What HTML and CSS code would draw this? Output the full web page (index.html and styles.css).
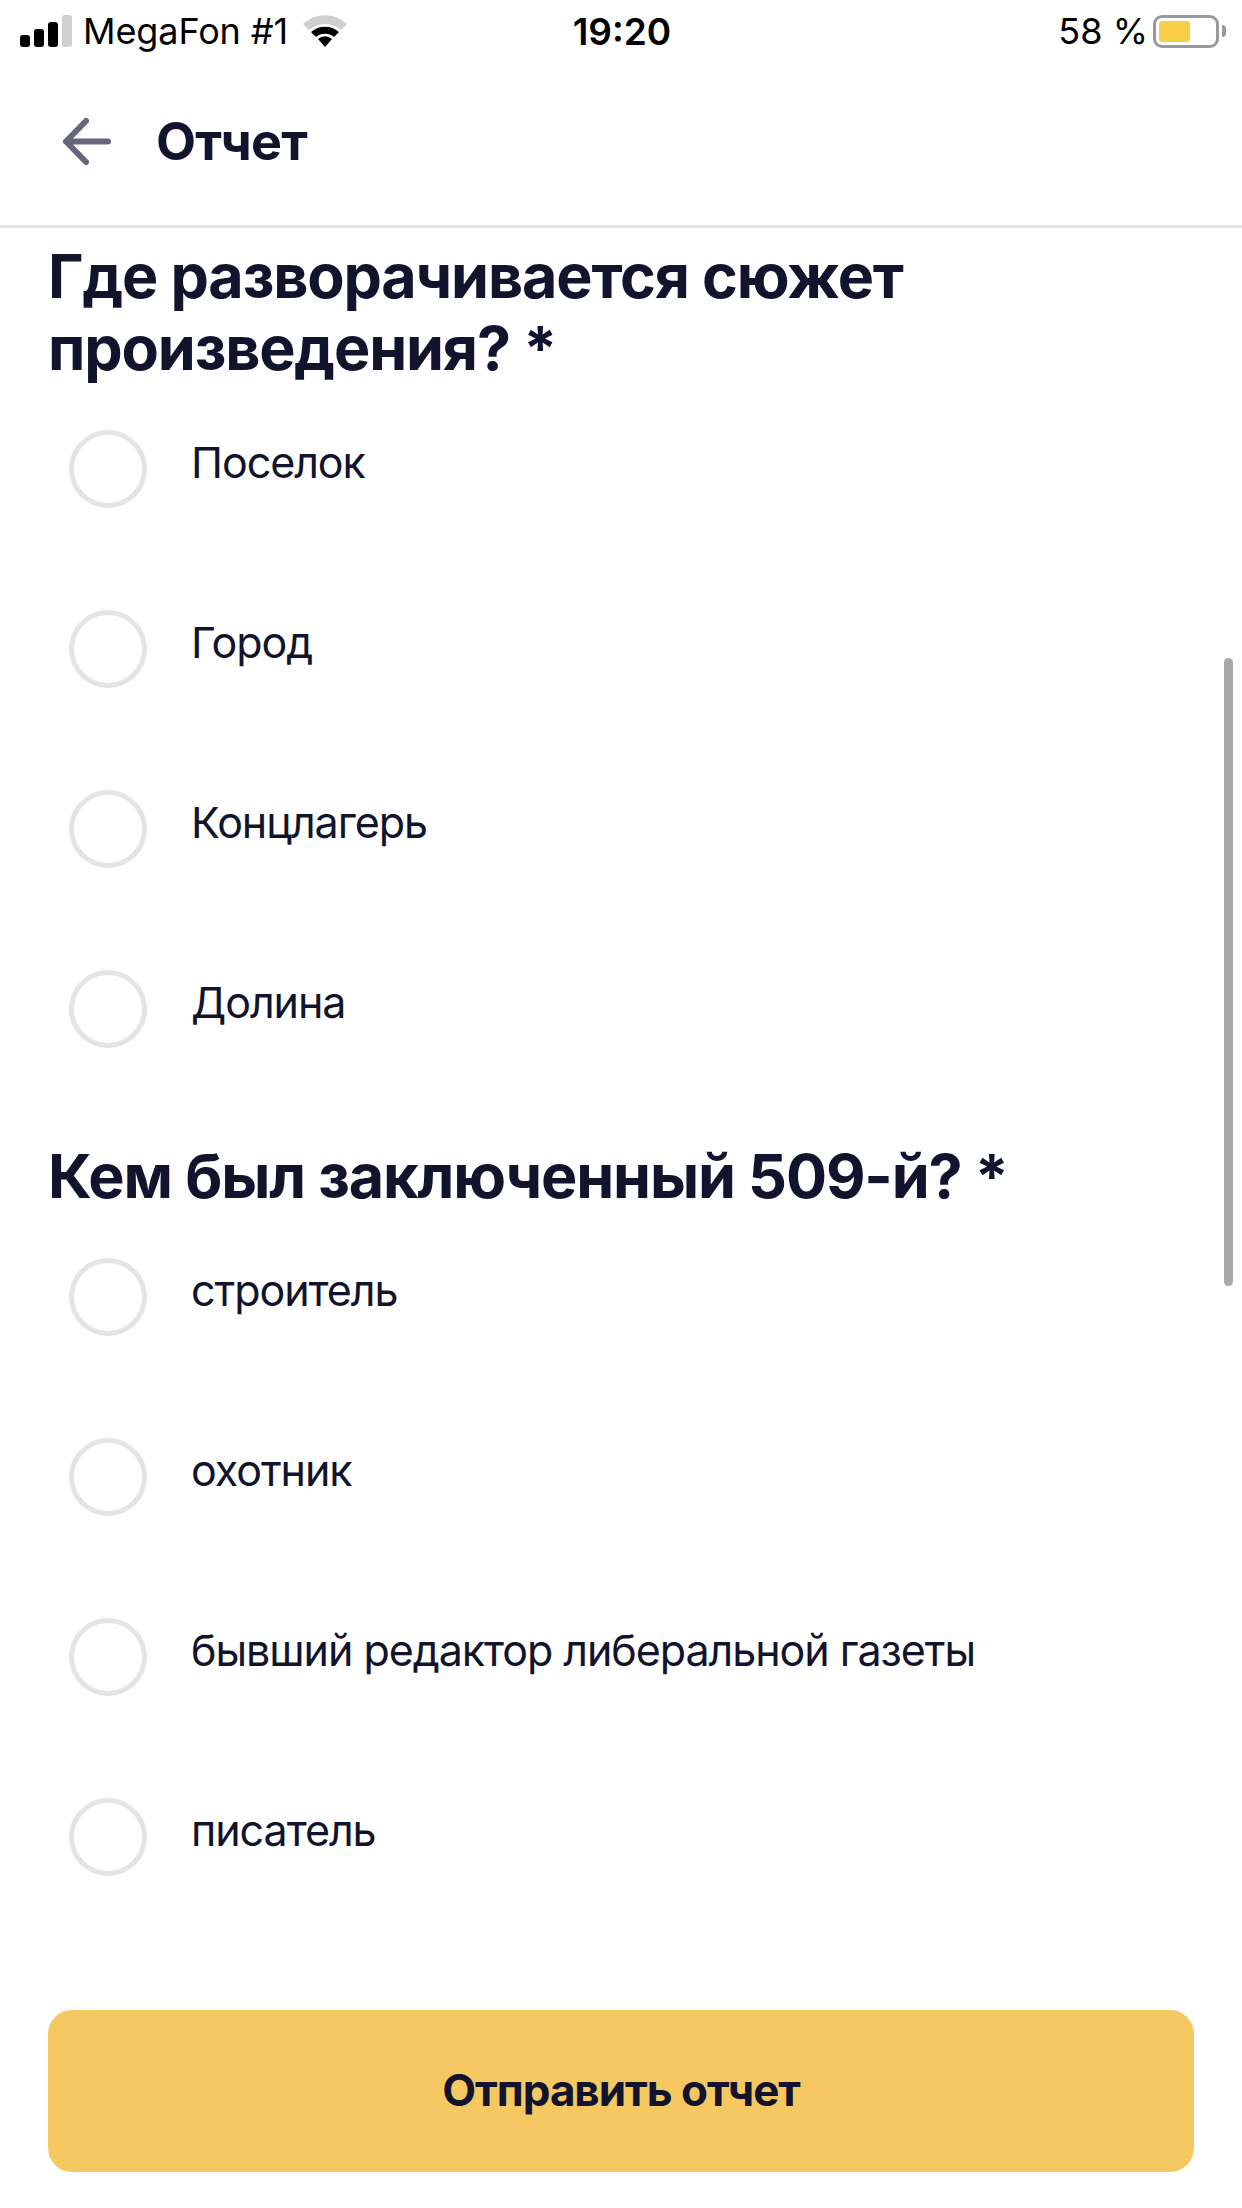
FILE: index.html
```html
<!DOCTYPE html>
<html lang="ru">
<head>
    <meta charset="UTF-8">
    <meta name="viewport" content="width=device-width, initial-scale=1.0">
    <title>Отчет</title>
    <link rel="stylesheet" href="styles.css">
</head>
<body>

<!-- статус-бар -->
<div class="statusbar">
    <div class="status-left">
        <div class="signal">
            <span class="bar bar-1"></span>
            <span class="bar bar-2"></span>
            <span class="bar bar-3"></span>
            <span class="bar bar-4"></span>
        </div>
        <span class="carrier">MegaFon #1</span>
        <svg class="wifi" width="46" height="34" viewBox="0 0 46 34">
            <path d="M1 10 A32 32 0 0 1 45 10 L39 16 A24 24 0 0 0 7 16 Z" fill="#cfcfcf"/>
            <path d="M9 18 A21 21 0 0 1 37 18 L32 23 A14 14 0 0 0 14 23 Z" fill="#000"/>
            <path d="M16 25 A10 10 0 0 1 30 25 L23 33 Z" fill="#000"/>
        </svg>
    </div>
    <div class="status-time">19:20</div>
    <div class="status-right">
        <span class="percent">58 %</span>
        <div class="battery"><div class="battery-level"></div></div>
        <div class="battery-tip"></div>
    </div>
</div>

<!-- шапка -->
<div class="header">
    <svg class="back" width="50" height="50" viewBox="0 0 50 50">
        <path d="M24 4 L4 24.500 L24 45 M4 24.500 H46" fill="none" stroke="#66667c" stroke-width="6" stroke-linecap="round" stroke-linejoin="round"/>
    </svg>
    <h1>Отчет</h1>
</div>

<!-- вопросы -->
<div class="content">
    <div class="question">
        <h2>Где разворачивается сюжет произведения? *</h2>
        <div class="options">
            <div class="option"><span class="radio"></span><span class="label">Поселок</span></div>
            <div class="option"><span class="radio"></span><span class="label">Город</span></div>
            <div class="option"><span class="radio"></span><span class="label">Концлагерь</span></div>
            <div class="option"><span class="radio"></span><span class="label">Долина</span></div>
        </div>
    </div>
    <div class="question">
        <h2>Кем был заключенный 509-й? *</h2>
        <div class="options">
            <div class="option"><span class="radio"></span><span class="label">строитель</span></div>
            <div class="option"><span class="radio"></span><span class="label">охотник</span></div>
            <div class="option"><span class="radio"></span><span class="label">бывший редактор либеральной газеты</span></div>
            <div class="option"><span class="radio"></span><span class="label">писатель</span></div>
        </div>
    </div>
</div>

<div class="scrollbar"></div>

<div class="footer">
    <button class="submit">Отправить отчет</button>
</div>

</body>
</html>
```

FILE: styles.css
```css
/* общие стили */
html, body {
    margin: 0;
    padding: 0;
}

body {
    position: relative;
    width: 1242px;
    height: 2208px;
    overflow: hidden;
    background: #fff;
    color: #12142d;
    font-family: Inter, "Noto Sans", sans-serif;
}

/* статус-бар */
.statusbar {
    height: 62px;
    box-sizing: border-box;
    padding: 0 16px 0 20px;
    display: grid;
    grid-template-columns: 1fr auto 1fr;
    align-items: center;
    color: #000;
    font-size: 35px;
}

.status-left {
    display: flex;
    align-items: center;
}

.signal {
    display: flex;
    align-items: flex-end;
    gap: 4px;
    height: 32px;
}

.bar {
    width: 10px;
    border-radius: 3px;
    background: #000;
}

.bar-1 { height: 12px; }
.bar-2 { height: 18px; }
.bar-3 { height: 25px; }
.bar-4 { height: 32px; background: #cfcfcf; }

.carrier {
    margin-left: 11px;
    font-size: 36px;
    letter-spacing: -0.1px;
}

.wifi {
    margin-left: 14px;
}

.status-time {
    margin-right: 2px;
    font-weight: 600;
    font-size: 37px;
}

.status-right {
    display: flex;
    align-items: center;
    justify-content: flex-end;
}

.percent {
    margin-right: 5px;
    font-size: 36px;
}

.battery {
    width: 66px;
    height: 33px;
    box-sizing: border-box;
    border: 3px solid #999;
    border-radius: 9px;
    padding: 3px;
}

.battery-level {
    width: 31px;
    height: 100%;
    border-radius: 3px;
    background: #f9cf47;
}

.battery-tip {
    width: 4px;
    height: 12px;
    margin-left: 3px;
    border-radius: 0 4px 4px 0;
    background: #999;
}

/* шапка */
.header {
    height: 166px;
    box-sizing: border-box;
    padding: 0 0 4px 62px;
    display: flex;
    align-items: center;
    border-bottom: 3px solid #e4e4e4;
}

.back {
    margin-right: 44px;
}

.header h1 {
    margin: 0;
    font-size: 52px;
    font-weight: 700;
    letter-spacing: -0.7px;
}

/* вопросы */
.content {
    padding: 12px 48px 0;
}

.question {
    margin-bottom: 92px;
}

.question h2 {
    margin: 0 0 46px;
    max-width: 1000px;
    font-size: 61px;
    line-height: 72px;
    font-weight: 700;
    letter-spacing: -1.15px;
}

.options {
    display: flex;
    flex-direction: column;
    gap: 102px;
}

.option {
    height: 78px;
    padding-left: 21px;
    display: flex;
    align-items: flex-start;
}

.radio {
    width: 78px;
    height: 78px;
    box-sizing: border-box;
    border: 5px solid #e4e4e4;
    border-radius: 50%;
    flex-shrink: 0;
}

.label {
    margin-left: 44px;
    font-size: 43px;
    line-height: 65px;
    letter-spacing: -1.05px;
}

/* полоса прокрутки */
.scrollbar {
    position: absolute;
    top: 658px;
    left: 1224px;
    width: 9px;
    height: 628px;
    border-radius: 5px;
    background: #a9a9a9;
}

/* кнопка */
.footer {
    position: absolute;
    left: 48px;
    right: 48px;
    top: 2010px;
}

.submit {
    width: 100%;
    height: 162px;
    padding-bottom: 3px;
    border: none;
    border-radius: 24px;
    background: #f6c862;
    color: #12142d;
    font-family: inherit;
    font-size: 44px;
    font-weight: 700;
    letter-spacing: -1.05px;
}
```
